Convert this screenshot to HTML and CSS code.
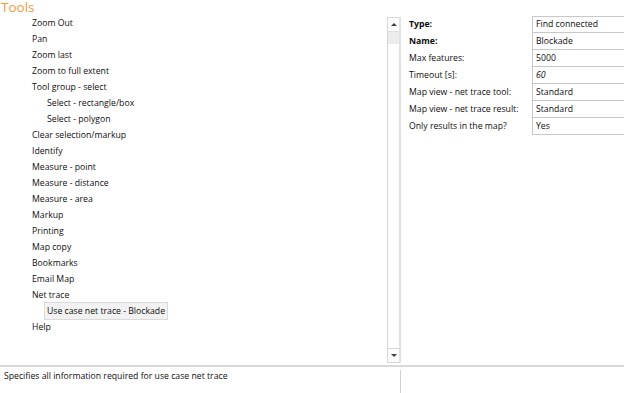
FILE: index.html
```html
<!DOCTYPE html>
<html>
<head>
<meta charset="utf-8">
<link rel="stylesheet" href="styles.css">
</head>
<body>
<div class="app">
  <div class="main">
    <div class="tree-pane">
      <div class="title">Tools</div>
      <ul class="tree">
        <li class="lvl1">Zoom Out</li>
        <li class="lvl1">Pan</li>
        <li class="lvl1">Zoom last</li>
        <li class="lvl1">Zoom to full extent</li>
        <li class="lvl1">Tool group - select</li>
        <li class="lvl2">Select - rectangle/box</li>
        <li class="lvl2">Select - polygon</li>
        <li class="lvl1">Clear selection/markup</li>
        <li class="lvl1">Identify</li>
        <li class="lvl1">Measure - point</li>
        <li class="lvl1">Measure - distance</li>
        <li class="lvl1">Measure - area</li>
        <li class="lvl1">Markup</li>
        <li class="lvl1">Printing</li>
        <li class="lvl1">Map copy</li>
        <li class="lvl1">Bookmarks</li>
        <li class="lvl1">Email Map</li>
        <li class="lvl1">Net trace</li>
        <li class="lvl2"><span class="selected">Use case net trace - Blockade</span></li>
        <li class="lvl1">Help</li>
      </ul>
    </div>
    <div class="scrollbar">
      <div class="sb-btn"><span class="arrow-up"></span></div>
      <div class="sb-thumb"></div>
      <div class="sb-track"></div>
      <div class="sb-btn"><span class="arrow-down"></span></div>
    </div>
    <div class="props-pane">
      <div class="props">
        <div class="label bold">Type:</div><div class="value">Find connected</div>
        <div class="label bold">Name:</div><div class="value">Blockade</div>
        <div class="label">Max features:</div><div class="value">5000</div>
        <div class="label">Timeout [s]:</div><div class="value italic">60</div>
        <div class="label">Map view - net trace tool:</div><div class="value">Standard</div>
        <div class="label">Map view - net trace result:</div><div class="value">Standard</div>
        <div class="label">Only results in the map?</div><div class="value">Yes</div>
      </div>
    </div>
  </div>
  <div class="footer">
    <div class="desc">Specifies all information required for use case net trace</div>
    <div class="desc-right"></div>
  </div>
</div>
</body>
</html>
```
FILE: styles.css
```css
html, body {
  margin: 0;
  padding: 0;
  background: #ffffff;
}
body {
  font-family: "Open Sans", "Noto Sans", sans-serif;
  font-size: 8.7px;
  color: #0d0d0d;
}
.app {
  width: 624px;
  height: 393px;
  display: flex;
  flex-direction: column;
  overflow: hidden;
}
.main {
  display: flex;
  height: 365px;
  flex: none;
}
.tree-pane {
  width: 387px;
  flex: none;
}
.title {
  color: #f39a3e;
  font-size: 13.5px;
  line-height: 15px;
  height: 15px;
  padding-left: 1px;
}
.tree {
  list-style: none;
  margin: 0;
  padding: 0;
}
.tree li {
  height: 16px;
  line-height: 16px;
  white-space: nowrap;
}
.lvl1 { padding-left: 32px; }
.lvl2 { padding-left: 47px; }
.lvl2 .selected {
  margin-left: -3px;
  padding: 2px 2px 2px 2px;
  background: #f2f2f2;
  border: 1px solid #dadada;
}
.scrollbar {
  width: 14px;
  flex: none;
  margin-top: 17px;
  height: 346px;
  border: 1px solid #d6d6d6;
  border-right: 2px solid #e2e2e2;
  display: flex;
  flex-direction: column;
  box-sizing: border-box;
  background: #ffffff;
}
.sb-btn {
  height: 13px;
  flex: none;
  display: flex;
  align-items: center;
  justify-content: center;
  background: #fdfdfd;
}
.sb-btn:first-child { border-bottom: 1px solid #e0e0e0; }
.sb-btn:last-child { border-top: 1px solid #d6d6d6; }
.sb-thumb {
  height: 12px;
  flex: none;
  background: #ececec;
}
.sb-track { flex: 1; }
.arrow-up {
  width: 0; height: 0;
  border-left: 3px solid transparent;
  border-right: 3px solid transparent;
  border-bottom: 3px solid #404040;
}
.arrow-down {
  width: 0; height: 0;
  border-left: 3px solid transparent;
  border-right: 3px solid transparent;
  border-top: 3px solid #404040;
}
.props-pane {
  flex: 1;
  padding-top: 16px;
  padding-left: 8px;
}
.props {
  display: grid;
  grid-template-columns: 123px 1fr;
  grid-auto-rows: 17px;
}
.label {
  line-height: 16px;
  white-space: nowrap;
}
.bold { font-weight: bold; }
.italic { font-style: italic; }
.value {
  border: 1px solid #c8c8c8;
  border-top: none;
  border-right: none;
  padding-left: 3px;
  line-height: 16px;
  white-space: nowrap;
}
.props .value:nth-child(2) { border-top: 1px solid #c8c8c8; line-height: 15px; }
.footer {
  flex: 1;
  display: flex;
  border-top: 2px solid #d8d8d8;
}
.desc {
  width: 401px;
  box-sizing: border-box;
  padding-left: 4px;
  line-height: 12px;
  border-right: 1px solid #d0d0d0;
  margin-top: 3px;
}
.desc-right { flex: 1; }
```
